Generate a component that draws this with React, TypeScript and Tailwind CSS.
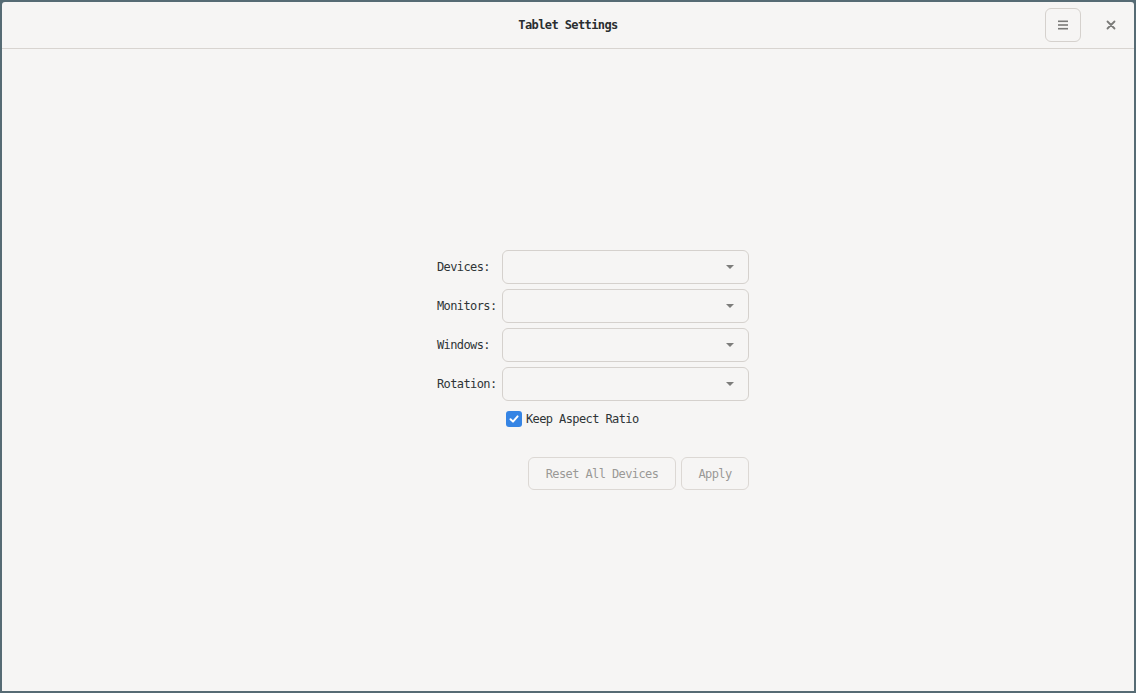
import React from "react";

const mono = { fontFamily: '"DejaVu Sans Mono", "Liberation Mono", monospace' };

function Combo() {
  return (
    <div className="h-[34px] w-[247px] rounded-[6px] border border-[#d5d1cd] bg-[#f6f5f4] flex items-center justify-end pr-[13px]">
      <svg width="10" height="6" viewBox="0 0 10 6">
        <path d="M1 1 L9 1 L5 5 Z" fill="#7d7d7b" />
      </svg>
    </div>
  );
}

export default function App() {
  const labels = ["Devices:", "Monitors:", "Windows:", "Rotation:"];
  return (
    <div
      className="w-[1136px] h-[693px] bg-[#566b74] p-[2px] flex"
      style={mono}
    >
      <div className="flex-1 flex flex-col bg-[#f6f5f4] rounded-t-[3px] overflow-hidden text-[12px] tracking-[-0.6px] text-[#2e3436]">
        <div className="h-[47px] shrink-0 border-b border-[#d8d4d0] flex items-center relative">
          <div className="flex-1 text-center font-bold text-[#2a2e30]">Tablet Settings</div>
          <div className="absolute left-[1043px] top-[6px] w-[36px] h-[34px] rounded-[6px] border border-[#d5d1cd] flex items-center justify-center">
            <svg width="12" height="10" viewBox="0 0 12 10">
              <rect x="1" y="0.5" width="10" height="1.6" fill="#7a7a78" />
              <rect x="1" y="4.2" width="10" height="1.6" fill="#7a7a78" />
              <rect x="1" y="7.9" width="10" height="1.6" fill="#7a7a78" />
            </svg>
          </div>
          <div className="absolute left-[1101px] top-[15px] w-[16px] h-[16px] flex items-center justify-center">
            <svg width="10" height="10" viewBox="0 0 10 10">
              <path d="M1.5 1.5 L8.5 8.5 M8.5 1.5 L1.5 8.5" stroke="#7a7a78" strokeWidth="1.8" strokeLinecap="round" />
            </svg>
          </div>
        </div>
        <div className="flex-1 flex items-center justify-center pl-[50px]">
          <div className="flex flex-col">
            <div className="grid grid-cols-[60px_247px] gap-x-[5px] gap-y-[5px] items-center">
              {labels.map((l) => (
                <React.Fragment key={l}>
                  <div className="whitespace-nowrap">{l}</div>
                  <Combo />
                </React.Fragment>
              ))}
            </div>
            <div className="flex items-center h-[24px] mt-[6px] pl-[69px] gap-[4px]">
              <div className="w-[16px] h-[16px] rounded-[3px] bg-[#3584e4] flex items-center justify-center">
                <svg width="12" height="12" viewBox="0 0 12 12">
                  <path d="M2.5 6.2 L5 8.6 L9.6 3.4" stroke="#ffffff" strokeWidth="2" fill="none" strokeLinecap="round" strokeLinejoin="round" />
                </svg>
              </div>
              <span>Keep Aspect Ratio</span>
            </div>
            <div className="flex justify-end gap-[5px] mt-[26px]">
              <div className="h-[33px] w-[148px] rounded-[6px] border border-[#dcd8d4] flex items-center justify-center text-[#9a9996]">
                Reset All Devices
              </div>
              <div className="h-[33px] w-[68px] rounded-[6px] border border-[#dcd8d4] flex items-center justify-center text-[#9a9996]">
                Apply
              </div>
            </div>
          </div>
        </div>
      </div>
    </div>
  );
}
